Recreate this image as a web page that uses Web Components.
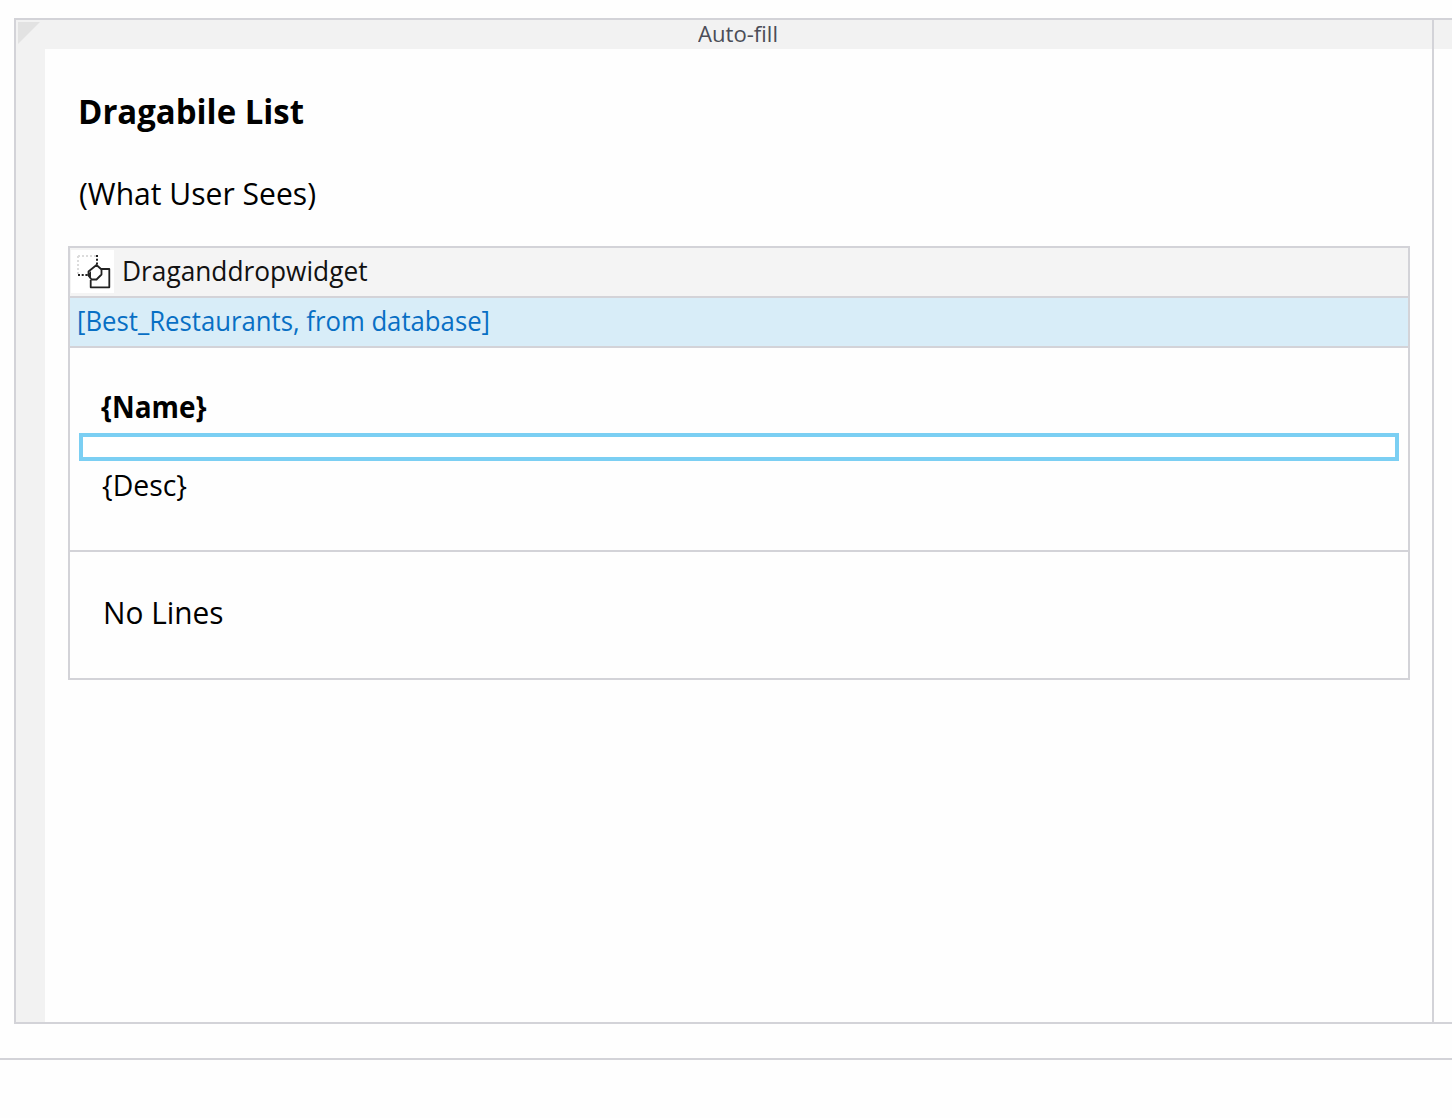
<!DOCTYPE html>
<html lang="en">
<head>
<meta charset="utf-8">
<title>Page editor</title>
<style>
html,body{margin:0;padding:0;height:100%;background:#fefefe}
body{font-family:"Open Sans","Noto Sans",sans-serif;color:#000;overflow:hidden}
</style>
</head>
<body>
<page-canvas></page-canvas>
<script>
const define = (name, html, init) => customElements.define(name, class extends HTMLElement {
  connectedCallback() {
    if (this.shadowRoot) return;
    const t = document.createElement('template');
    t.innerHTML = html;
    this.attachShadow({mode: 'open'}).append(t.content.cloneNode(true));
    if (init) init(this);
  }
});

/* A single line of text condensed or widened to the given width. */
define('fit-text', `<style>
:host{display:block;white-space:nowrap;line-height:var(--line,40px)}
span{display:inline-block;transform-origin:0 50%}
</style><span></span>`, el => {
  const s = el.shadowRoot.querySelector('span');
  s.textContent = el.getAttribute('text');
  el.style.fontSize = el.getAttribute('size') + 'px';
  const w = +el.getAttribute('width');
  el.style.width = w + 'px';
  s.style.transform = `scaleX(${w / s.getBoundingClientRect().width})`;
});

define('overlap-icon', `<style>
:host{display:block;width:43px;height:43px;background:#fff}
svg{display:block}
</style>
<svg width="43" height="43" viewBox="0 0 43 43" fill="none">
<path d="M7 6H26M7 6V25" stroke="#dcdcdc" stroke-width="2" stroke-dasharray="2 2"/>
<path d="M26 5V15M7 25H17" stroke="#222" stroke-width="2" stroke-dasharray="2 1.7"/>
<path d="M30 19H38.3V37.3H19.7V30" stroke="#222" stroke-width="1.8" stroke-linejoin="round"/>
<path d="M25.5 15L30.5 19.5V24.5L25.5 29.5H20.5L17.5 25.5V21.5Z" stroke="#222" stroke-width="1.8" stroke-linejoin="round"/>
<path d="M16 25L20 21V28Z" fill="#222"/>
</svg>`);

define('drop-target', `<style>
:host{display:block;box-sizing:border-box;height:28px;border:4px solid #7bcff3;background:#fff}
</style>`);

define('list-widget', `<style>
:host{display:flex;flex-direction:column;box-sizing:border-box;width:1342px;height:434px;border:2px solid #d3d3d8;background:#fefefe}
header{display:flex;gap:8px;box-sizing:border-box;height:50px;padding-left:1px;background:#f4f4f4;border-bottom:2px solid #d3d3d8;color:#111}
overlap-icon{margin-top:2px}
.source{height:48px;padding-left:7px;background:#d8edf8;border-bottom:2px solid #d3d3d8;color:#086fc4;--line:45px}
.row{box-sizing:border-box;height:204px;padding:39px 9px 0;border-bottom:2px solid #d3d3d8}
.empty{padding:40px 33px 0}
header fit-text{--line:45px}
.name{margin-left:22px;font-weight:700}
drop-target{margin:6px 0 4px}
.desc{margin-left:23px}
header,.source,.row{flex:none}
</style>
<header><overlap-icon></overlap-icon><fit-text text="Draganddropwidget" size="27.5" width="245.5"></fit-text></header>
<div class="source"><fit-text text="[Best_Restaurants, from database]" size="27" width="413"></fit-text></div>
<div class="row">
<fit-text class="name" text="{Name}" size="30" width="105.5"></fit-text>
<drop-target></drop-target>
<fit-text class="desc" text="{Desc}" size="30" width="85"></fit-text>
</div>
<div class="empty"><fit-text text="No Lines" size="31" width="120.5"></fit-text></div>`);

define('layout-column', `<style>
:host{display:flex;flex-direction:column;box-sizing:border-box;width:1420px;height:1006px;border:2px solid #d3d3d8;background:#fefefe}
header{display:grid;grid-template-columns:29px 1fr;flex:none;height:29px;padding-right:2px;background:#f2f2f2;color:#4b4d57}
header fit-text{--line:27px;justify-self:center}
.corner{width:22px;height:22px;margin:2px 0 0 2px;background:#e2e2e2;clip-path:polygon(0 0,100% 0,0 100%)}
.body{display:flex;flex:1}
.rail{width:29px;background:#f2f2f2}
main{padding:42px 0 0 23px}
.title{margin-left:10px;font-weight:700}
.sub{margin:42px 0 33px 10.5px}
</style>
<header><div class="corner"></div><fit-text text="Auto-fill" size="22" width="80"></fit-text></header>
<div class="body"><div class="rail"></div>
<main>
<fit-text class="title" text="Dragabile List" size="33.5" width="226"></fit-text>
<fit-text class="sub" text="(What User Sees)" size="31" width="237"></fit-text>
<list-widget></list-widget>
</main></div>`);

define('page-canvas', `<style>
:host{display:block;box-sizing:border-box;height:1118px;padding-top:18px;overflow:hidden}
.columns{display:flex;height:1006px;padding-left:14px}
layout-column{flex:none}
.next{flex:1;box-sizing:border-box;border:solid #d3d3d8;border-width:2px 0}
.next div{height:29px;background:#f2f2f2}
.rule{height:2px;margin-top:34px;background:#d3d3d8}
</style>
<div class="columns"><layout-column></layout-column><div class="next"><div></div></div></div>
<div class="rule"></div>`);
</script>
</body>
</html>
